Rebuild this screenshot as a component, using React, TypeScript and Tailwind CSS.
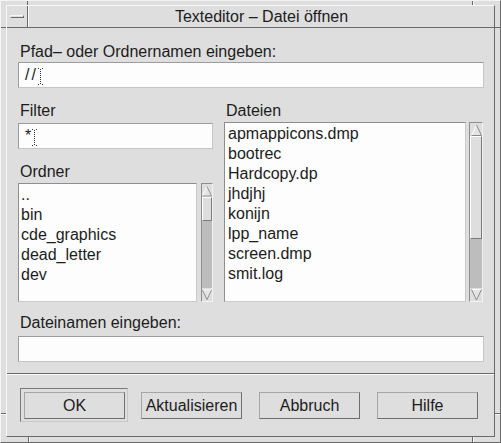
import React from "react";

const font = { fontFamily: '"Liberation Sans", Arial, sans-serif' };

function Arrow({ dir }: { dir: "up" | "down" }) {
  return (
    <div className="h-[13px] flex items-center justify-center bg-[#dedede]">
      <svg width="11" height="12" viewBox="0 0 11 12">
        {dir === "up" ? (
          <>
            <polygon points="5.5,1 10.5,11.5 0.5,11.5" fill="#e4e4e4" />
            <polyline points="0.5,11.5 5.5,1" stroke="#ffffff" fill="none" />
            <polyline points="5.5,1 10.5,11.5 0.5,11.5" stroke="#8a8a8a" fill="none" />
          </>
        ) : (
          <>
            <polygon points="0.5,0.5 10.5,0.5 5.5,11" fill="#e4e4e4" />
            <polyline points="0.5,0.5 10.5,0.5" stroke="#ffffff" fill="none" />
            <polyline points="0.5,0.5 5.5,11 10.5,0.5" stroke="#8a8a8a" fill="none" />
          </>
        )}
      </svg>
    </div>
  );
}

function Scrollbar({ thumb, w }: { thumb: number; w: string }) {
  return (
    <div
      className={`${w} h-full flex flex-col border border-t-[#8e8e8e] border-l-[#8e8e8e] border-r-[#f2f2f2] border-b-[#f2f2f2] bg-[#bdbdbd]`}
    >
      <Arrow dir="up" />
      <div
        className="bg-[#dedede] border-t border-l border-t-[#ffffff] border-l-[#ffffff] border-b border-r border-b-[#7a7a7a] border-r-[#7a7a7a]"
        style={{ height: thumb }}
      />
      <div className="flex-1" />
      <Arrow dir="down" />
    </div>
  );
}

function Cursor() {
  return (
    <svg width="5" height="17" viewBox="0 0 5 17" className="inline-block -mb-[2px]">
      <rect x="0" y="0" width="1" height="1" fill="#333" />
      <rect x="4" y="0" width="1" height="1" fill="#333" />
      <line x1="2.5" y1="1" x2="2.5" y2="16" stroke="#333" strokeDasharray="1 1" />
      <rect x="0" y="16" width="1" height="1" fill="#333" />
      <rect x="4" y="16" width="1" height="1" fill="#333" />
    </svg>
  );
}

function Input({ children, w }: { children?: React.ReactNode; w: string }) {
  return (
    <div
      className={`${w} h-[26px] bg-[#fdfdfd] border border-t-[#9c9c9c] border-l-[#9c9c9c] border-b-[#c6c6c6] border-r-[#c6c6c6] flex items-center pl-[6px] text-[16px] leading-[20px] text-[#1c1c1c]`}
    >
      {children}
    </div>
  );
}

function List({ items, w, px }: { items: string[]; w: string; px: string }) {
  return (
    <div
      className={`${w} h-full bg-[#fdfdfd] border border-t-[#8e8e8e] border-l-[#8e8e8e] border-b-[#cacaca] border-r-[#cacaca] ${px} pt-[1px] text-[16px] leading-[20px] text-[#1c1c1c] overflow-hidden`}
    >
      {items.map((it) => (
        <div key={it} className="h-[20px] whitespace-nowrap">
          {it}
        </div>
      ))}
    </div>
  );
}

function Button({ label, w }: { label: string; w: string }) {
  return (
    <div
      className={`${w} h-[27px] bg-[#dedede] border border-t-[#a6a6a6] border-l-[#a6a6a6] border-b-[#6e6e6e] border-r-[#6e6e6e] flex items-center justify-center text-[16px] leading-[20px] text-[#1c1c1c]`}
    >
      {label}
    </div>
  );
}

export default function App() {
  return (
    <div
      style={font}
      className="relative w-[501px] h-[443px] bg-[#dedede] border border-t-[#f4f4f4] border-l-[#f4f4f4] border-r-[#6a6a6a] border-b-[#6a6a6a] pt-[4px] pl-[5px] pr-[5px] pb-[5px] flex text-[#1c1c1c]"
    >
      {/* resize ticks */}
      <div className="absolute left-[26px] top-0 w-[1px] h-[4px] bg-[#6a6a6a]" />
      <div className="absolute left-[471px] top-0 w-[1px] h-[4px] bg-[#6a6a6a]" />
      <div className="absolute left-[472px] top-0 w-[1px] h-[4px] bg-[#f8f8f8]" />
      <div className="absolute left-0 top-[26px] w-[5px] h-[1px] bg-[#6a6a6a]" />
      <div className="absolute right-0 top-[26px] w-[5px] h-[1px] bg-[#6a6a6a]" />
      <div className="absolute left-0 top-[412px] w-[5px] h-[1px] bg-[#6a6a6a]" />
      <div className="absolute left-0 top-[413px] w-[5px] h-[1px] bg-[#f8f8f8]" />
      <div className="absolute right-0 top-[412px] w-[5px] h-[1px] bg-[#6a6a6a]" />
      <div className="absolute right-0 top-[413px] w-[5px] h-[1px] bg-[#f8f8f8]" />
      <div className="absolute left-[27px] bottom-0 w-[1px] h-[5px] bg-[#6a6a6a]" />
      <div className="absolute left-[28px] bottom-0 w-[1px] h-[5px] bg-[#f8f8f8]" />
      <div className="absolute left-[471px] bottom-0 w-[1px] h-[5px] bg-[#6a6a6a]" />
      <div className="absolute left-[472px] bottom-0 w-[1px] h-[5px] bg-[#f8f8f8]" />

      {/* client */}
      <div className="flex-1 flex flex-col border-l border-t border-l-[#f8f8f8] border-t-[#f8f8f8] border-r border-b border-r-[#6a6a6a] border-b-[#6a6a6a]">
        {/* title bar */}
        <div className="h-[22px] flex border-b border-b-[#6a6a6a]">
          <div className="w-[21px] h-full border-r border-r-[#6a6a6a] flex items-center justify-center">
            <div className="w-[14px] h-[3px] border-t border-l border-t-[#f8f8f8] border-l-[#f8f8f8] border-b border-r border-b-[#6a6a6a] border-r-[#6a6a6a] bg-[#dedede]" />
          </div>
          <div className="flex-1 flex items-center justify-center border-l border-l-[#f8f8f8] text-[16px] leading-[20px]">
            Texteditor – Datei öffnen
          </div>
        </div>

        {/* upper section */}
        <div className="flex flex-col pl-[11px] pr-[10px] pt-[14px] pb-[11px] border-b border-b-[#6a6a6a]">
          <div className="h-[20px] text-[16px] leading-[20px] pl-[2px]">
            Pfad– oder Ordnernamen eingeben:
          </div>
          <Input w="w-full">
            <span className="tracking-[2px]">//</span>
            <Cursor />
          </Input>

          <div className="flex mt-[13px] gap-[11px] h-[201px]">
            {/* left column */}
            <div className="w-[195px] flex flex-col">
              <div className="h-[20px] text-[16px] leading-[20px] pl-[2px]">Filter</div>
              <div className="mt-[2px]">
                <Input w="w-full">
                  <span className="mr-[1px]">*</span>
                  <Cursor />
                </Input>
              </div>
              <div className="mt-[13px] h-[20px] text-[16px] leading-[20px] pl-[2px]">Ordner</div>
              <div className="mt-[1px] h-[119px] flex gap-[4px]">
                <List w="w-[179px]" px="pl-[2px]" items={["..", "bin", "cde_graphics", "dead_letter", "dev"]} />
                <Scrollbar thumb={24} w="w-[12px]" />
              </div>
            </div>
            {/* right column */}
            <div className="w-[259px] flex flex-col">
              <div className="h-[20px] text-[16px] leading-[20px] pl-[2px]">Dateien</div>
              <div className="mt-[1px] h-[180px] flex gap-[3px]">
                <List
                  w="w-[242px]"
                  px="pl-[3px]"
                  items={[
                    "apmappicons.dmp",
                    "bootrec",
                    "Hardcopy.dp",
                    "jhdjhj",
                    "konijn",
                    "lpp_name",
                    "screen.dmp",
                    "smit.log",
                  ]}
                />
                <Scrollbar thumb={103} w="w-[14px]" />
              </div>
            </div>
          </div>

          <div className="mt-[11px] h-[20px] text-[16px] leading-[20px] pl-[2px]">
            Dateinamen eingeben:
          </div>
          <div className="mt-[3px]">
            <Input w="w-full" />
          </div>
        </div>

        {/* button section */}
        <div className="flex-1 border-t border-t-[#f8f8f8] flex items-start pt-[13px] pl-[13px]">
          <div className="w-[108px] h-[34px] border border-t-[#7a7a7a] border-l-[#7a7a7a] border-b-[#c8c8c8] border-r-[#c8c8c8] pl-[3px] pt-[3px]">
            <Button label="OK" w="w-[101px]" />
          </div>
          <div className="ml-[13px] mt-[4px]">
            <Button label="Aktualisieren" w="w-[101px]" />
          </div>
          <div className="ml-[17px] mt-[4px]">
            <Button label="Abbruch" w="w-[101px]" />
          </div>
          <div className="ml-[17px] mt-[4px]">
            <Button label="Hilfe" w="w-[101px]" />
          </div>
        </div>
      </div>
    </div>
  );
}
